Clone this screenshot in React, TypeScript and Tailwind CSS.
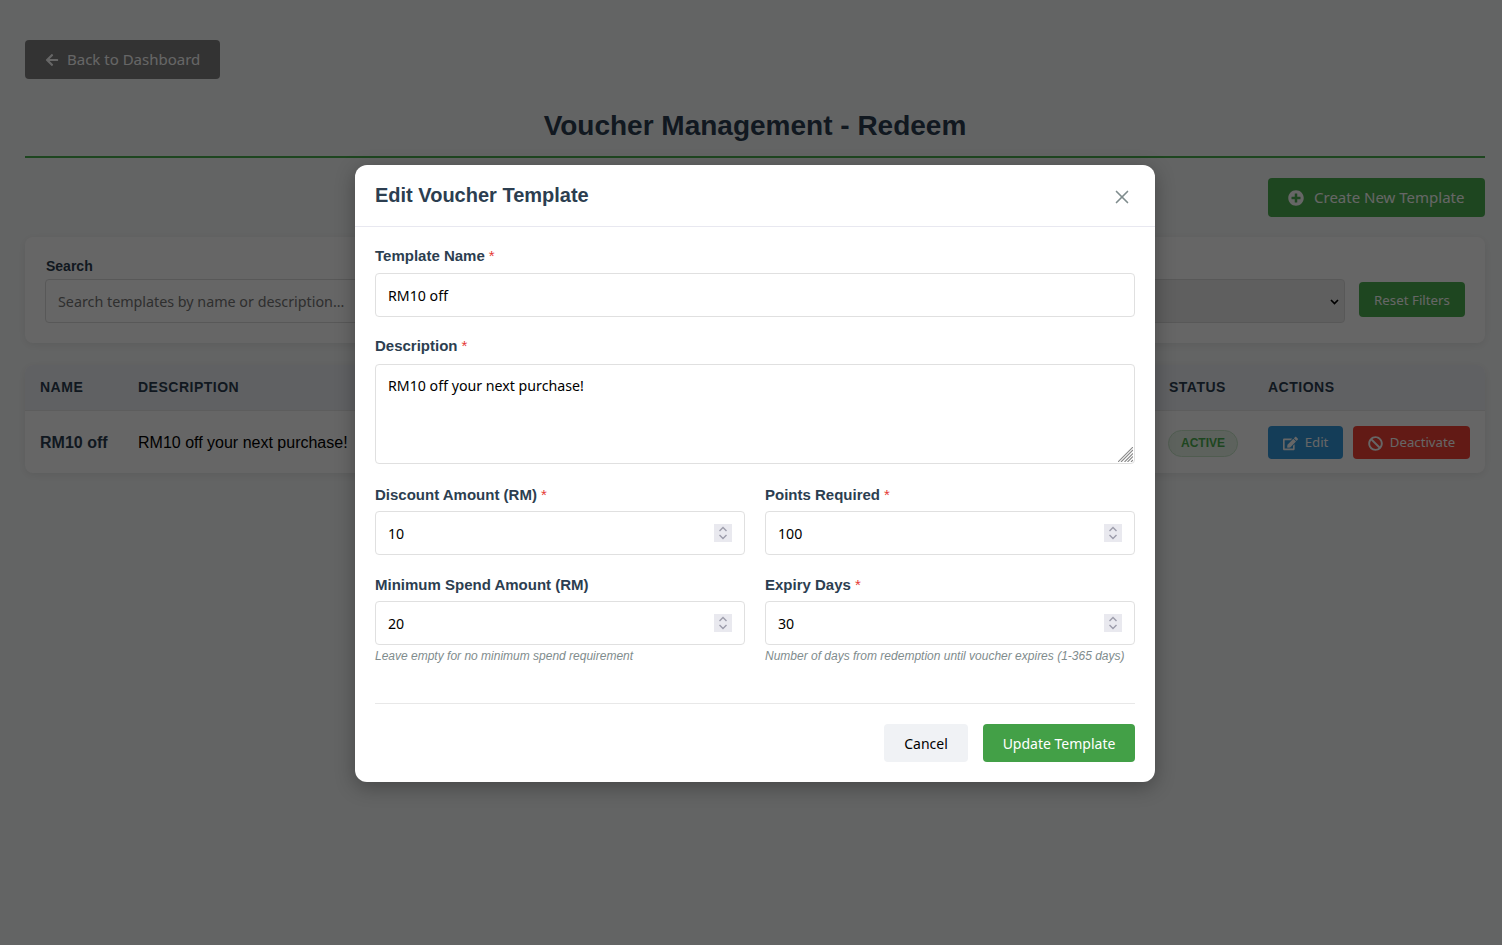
import { X } from "lucide-react";
import { FaArrowLeft, FaBan, FaEdit, FaPlusCircle } from "react-icons/fa";
import type { ReactNode } from "react";

const uiFont = "[font-family:'Noto_Sans',sans-serif]";
const inputClass = `block w-full h-[44px] rounded-[4px] border border-[#e0e0e0] bg-white px-3 text-[14.2px] text-black outline-none ${uiFont}`;

function FieldLabel({ children, required }: { children: ReactNode; required?: boolean }) {
  return (
    <label className="block text-[15px] font-bold leading-[17px] text-[#2c3e50]">
      {children}
      {required && <span className="ml-1 font-normal text-[#e53935]">*</span>}
    </label>
  );
}

function NumberField({ label, value, required, help }: { label: string; value: number; required?: boolean; help?: string }) {
  return (
    <div className="h-[90px]">
      <FieldLabel required={required}>{label}</FieldLabel>
      <div className="relative mt-2">
        <input
          type="number"
          defaultValue={value}
          className={`${inputClass} [appearance:textfield] [&::-webkit-inner-spin-button]:appearance-none [&::-webkit-outer-spin-button]:appearance-none`}
        />
        {/* spinner as the reference draws it */}
        <svg className="absolute right-[13px] top-[13px] h-[18px] w-[18px] bg-[#e9e9ef]" viewBox="0 0 18 18" fill="none" stroke="#9c9cab" strokeWidth="1.4">
          <path d="M5.5 7L9 3.5L12.5 7" />
          <path d="M5.5 11L9 14.5L12.5 11" />
        </svg>
      </div>
      {help && <p className="mt-[4px] text-[12px] italic leading-[14px] text-[#7f8c8d]">{help}</p>}
    </div>
  );
}

function EditTemplateModal() {
  return (
    <div className="absolute inset-0 flex items-center justify-center bg-black/60 pt-[2px]">
      <div className="w-[800px] rounded-[12px] bg-white shadow-[0_5px_20px_rgba(0,0,0,0.3)]">
        <div className="flex h-[62px] items-center justify-between border-b border-[#e8e8f0] px-5">
          <h2 className="pb-[2px] text-[20px] font-bold text-[#2c3e50]">Edit Voucher Template</h2>
          <X className="mr-[2px] mt-[3px] h-[22px] w-[22px] text-[#7f8c8d]" strokeWidth={1.8} />
        </div>
        <form className="px-5 pt-5 pb-5">
          <FieldLabel required>Template Name</FieldLabel>
          <input type="text" defaultValue="RM10 off" className={`mt-[9px] ${inputClass}`} />
          <div className="mt-5">
            <FieldLabel required>Description</FieldLabel>
            <div className="relative mt-[10px]">
              <textarea
                defaultValue="RM10 off your next purchase!"
                className={`block h-[100px] w-full resize-none rounded-[4px] border border-[#e0e0e0] bg-white px-3 py-[11px] text-[14.2px] leading-[20px] text-black outline-none ${uiFont}`}
              />
              <svg className="absolute bottom-[2px] right-[2px] h-[15px] w-[15px]" viewBox="0 0 15 15" stroke="#8a8a8a" strokeWidth="1.1">
                <path d="M0 15L15 0M3 15L15 3M6.5 15L15 6.5M9.5 15L15 9.5M13 15L15 13" />
              </svg>
            </div>
          </div>
          <div className="mt-[22px] grid grid-cols-2 gap-x-5">
            <NumberField label="Discount Amount (RM)" value={10} required />
            <NumberField label="Points Required" value={100} required />
            <NumberField label="Minimum Spend Amount (RM)" value={20} help="Leave empty for no minimum spend requirement" />
            <NumberField
              label="Expiry Days"
              value={30}
              required
              help="Number of days from redemption until voucher expires (1-365 days)"
            />
          </div>
          <div className="mt-[37px] flex justify-end gap-[15px] border-t border-[#e8e8e8] pt-5">
            <button type="button" className={`h-[38px] w-[84px] rounded-[4px] bg-[#f0f2f5] text-[14px] text-black ${uiFont}`}>
              Cancel
            </button>
            <button type="button" className={`h-[38px] w-[152px] rounded-[4px] bg-[#43a047] text-[14px] text-white ${uiFont}`}>
              Update Template
            </button>
          </div>
        </form>
      </div>
    </div>
  );
}

export default function App() {
  return (
    <div className="h-[945px] w-[1502px] overflow-hidden">
      <div className="relative h-[945px] w-[1510px] bg-[#f8fafa] px-[25px] pt-10 font-['Liberation_Sans',sans-serif]">
        <button className={`flex h-[39px] w-[195px] items-center gap-[8px] rounded-[4px] bg-[#808080] pl-[20px] text-[15px] text-white ${uiFont}`}>
          <FaArrowLeft className="h-[14px] w-[14px]" />
          Back to Dashboard
        </button>

        <h1 className="mt-[29px] border-b-2 border-[#4caf50] pb-[12px] text-center text-[28px] font-bold leading-[36px] text-[#2c3e50]">
          Voucher Management - Redeem
        </h1>

        <div className="mt-5 flex justify-end">
          <button className={`flex h-[39px] w-[217px] items-center gap-[10px] rounded-[4px] bg-[#4caf50] pl-5 text-[15px] text-white ${uiFont}`}>
            <FaPlusCircle className="h-[16px] w-[16px]" />
            Create New Template
          </button>
        </div>

        <div className="mt-5 flex h-[106px] items-end gap-[14px] rounded-[8px] bg-white px-5 pb-5 shadow-[0_2px_8px_rgba(0,0,0,0.08)]">
          <div className="w-[640px]">
            <label className="mb-[5px] ml-px block text-[14px] font-bold leading-[16px] text-[#2c3e50]">Search</label>
            <input
              placeholder="Search templates by name or description..."
              className={`block h-[44px] w-full rounded-[4px] border border-[#dddddd] px-3 text-[14.3px] outline-none placeholder:text-[#757575] ${uiFont}`}
            />
          </div>
          <div className="relative h-[44px] flex-1">
            <select className="h-full w-full appearance-none rounded-[4px] border border-[#dddddd] bg-[#eeeeee] px-3 text-[15px]" />
            <svg className="absolute right-[6px] top-[20px] h-[6px] w-[9px]" viewBox="0 0 9 6" fill="none" stroke="#000000" strokeWidth="1.7">
              <path d="M1 1L4.5 4.5L8 1" />
            </svg>
          </div>
          <button className={`mb-[6px] h-[35px] w-[106px] rounded-[4px] bg-[#4caf50] pt-[2px] text-[13.3px] text-white ${uiFont}`}>Reset Filters</button>
        </div>

        <div className="mt-[22px] overflow-hidden rounded-[8px] bg-white shadow-[0_2px_8px_rgba(0,0,0,0.08)]">
          <div className="flex h-[46px] items-center border-b border-[#e8e8e8] bg-[#f1f3f7] px-[15px] text-[14px] font-bold tracking-[0.5px] text-[#2c3e50]">
            <span className="w-[98px]">NAME</span>
            <span className="flex-1">DESCRIPTION</span>
            <span className="w-[99px]">STATUS</span>
            <span className="w-[202px]">ACTIONS</span>
          </div>
          <div className="flex h-[62px] items-center px-[15px] text-[16px] text-black">
            <span className="mt-[2px] w-[98px] font-bold text-[#2c3e50]">RM10 off</span>
            <span className="mt-[2px] flex-1">RM10 off your next purchase!</span>
            <span className="mt-[2px] w-[99px]">
              <span className="-ml-px inline-flex h-[27px] w-[70px] items-center justify-center rounded-full border border-[#c8e6c9] bg-[#e8f5e9] text-[12px] font-bold text-[#4caf50]">
                ACTIVE
              </span>
            </span>
            <span className={`flex w-[202px] gap-[10px] text-[13.2px] text-white ${uiFont}`}>
              <span className="flex h-[33px] w-[75px] items-center justify-center gap-[7px] rounded-[4px] bg-[#3498db] pt-[2px]">
                <FaEdit className="h-[15px] w-[15px]" />
                Edit
              </span>
              <span className="flex h-[33px] w-[117px] items-center justify-center gap-[7px] rounded-[4px] bg-[#f44336] pt-[2px]">
                <FaBan className="h-[15px] w-[15px]" />
                Deactivate
              </span>
            </span>
          </div>
        </div>

        <EditTemplateModal />
      </div>
    </div>
  );
}
